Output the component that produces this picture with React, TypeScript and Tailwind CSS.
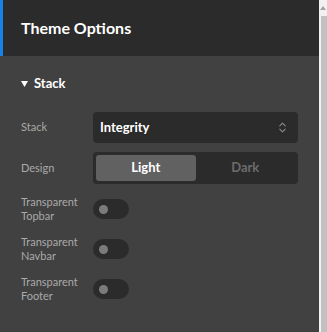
import { ChevronsUpDown } from 'lucide-react'

const font = { fontFamily: 'Lato, "Open Sans", sans-serif' }

const Toggle = () => (
  <div className="flex h-[20px] w-[36px] items-center rounded-full bg-[#2b2b2b] pl-[6px]">
    <div className="h-[9px] w-[9px] rounded-full bg-[#7b7b7b]" />
  </div>
)

const ToggleRow = ({ name }: { name: string }) => (
  <div className="flex items-center">
    <div className="w-[72px] text-[11px] leading-[14px] text-[#a9a9a9]">
      Transparent
      <br />
      {name}
    </div>
    <Toggle />
  </div>
)

export default function App() {
  return (
    <div className="flex h-[332px] w-[327px] overflow-hidden" style={font}>
      <div className="flex w-[319px] flex-col">
        {/* Header */}
        <div className="flex h-[56px] shrink-0 items-center border-l-[3px] border-[#1781e6] bg-[#2b2b2b] pl-[18px]">
          <h1 className="text-[16px] font-bold text-white">Theme Options</h1>
        </div>

        {/* Body */}
        <div className="flex flex-1 flex-col bg-[#414141] px-[21px] pt-[18px]">
          <div className="flex h-[20px] items-center gap-[6px]">
            <svg width="7" height="6" viewBox="0 0 7 6">
              <path d="M0 0 L7 0 L3.5 6 Z" fill="#ffffff" />
            </svg>
            <span className="text-[13px] font-bold text-white">Stack</span>
          </div>

          <div className="mt-[18px] flex items-center">
            <div className="w-[72px] text-[11px] text-[#a9a9a9]">Stack</div>
            <div className="flex h-[31px] flex-1 items-center justify-between rounded-[4px] bg-[#2b2b2b] pl-[7px] pr-[9px]">
              <span className="text-[13px] font-bold text-white">Integrity</span>
              <ChevronsUpDown className="h-[13px] w-[13px] text-[#8c8c8c]" strokeWidth={2} />
            </div>
          </div>

          <div className="mt-[9px] flex items-center">
            <div className="w-[72px] text-[11px] text-[#a9a9a9]">Design</div>
            <div className="flex h-[32px] flex-1 rounded-[4px] bg-[#2b2b2b] p-[3px]">
              <div className="flex flex-1 items-center justify-center rounded-[3px] bg-[#616161] text-[13px] font-bold text-white">
                Light
              </div>
              <div className="flex flex-1 items-center justify-center text-[13px] font-bold text-[#6c6c6c]">
                Dark
              </div>
            </div>
          </div>

          <div className="mt-[11px] flex flex-col gap-[12px]">
            <ToggleRow name="Topbar" />
            <ToggleRow name="Navbar" />
            <ToggleRow name="Footer" />
          </div>
        </div>
      </div>

      {/* Scrollbar */}
      <div className="flex w-[8px] flex-col bg-[#f1f1f1]">
        <div className="flex h-[16px] items-center justify-center">
          <svg width="6" height="4" viewBox="0 0 6 4">
            <path d="M0 4 L3 0 L6 4 Z" fill="#a3a3a3" />
          </svg>
        </div>
        <div className="ml-[2px] flex-1 bg-[#c1c1c1]" />
      </div>
    </div>
  )
}
